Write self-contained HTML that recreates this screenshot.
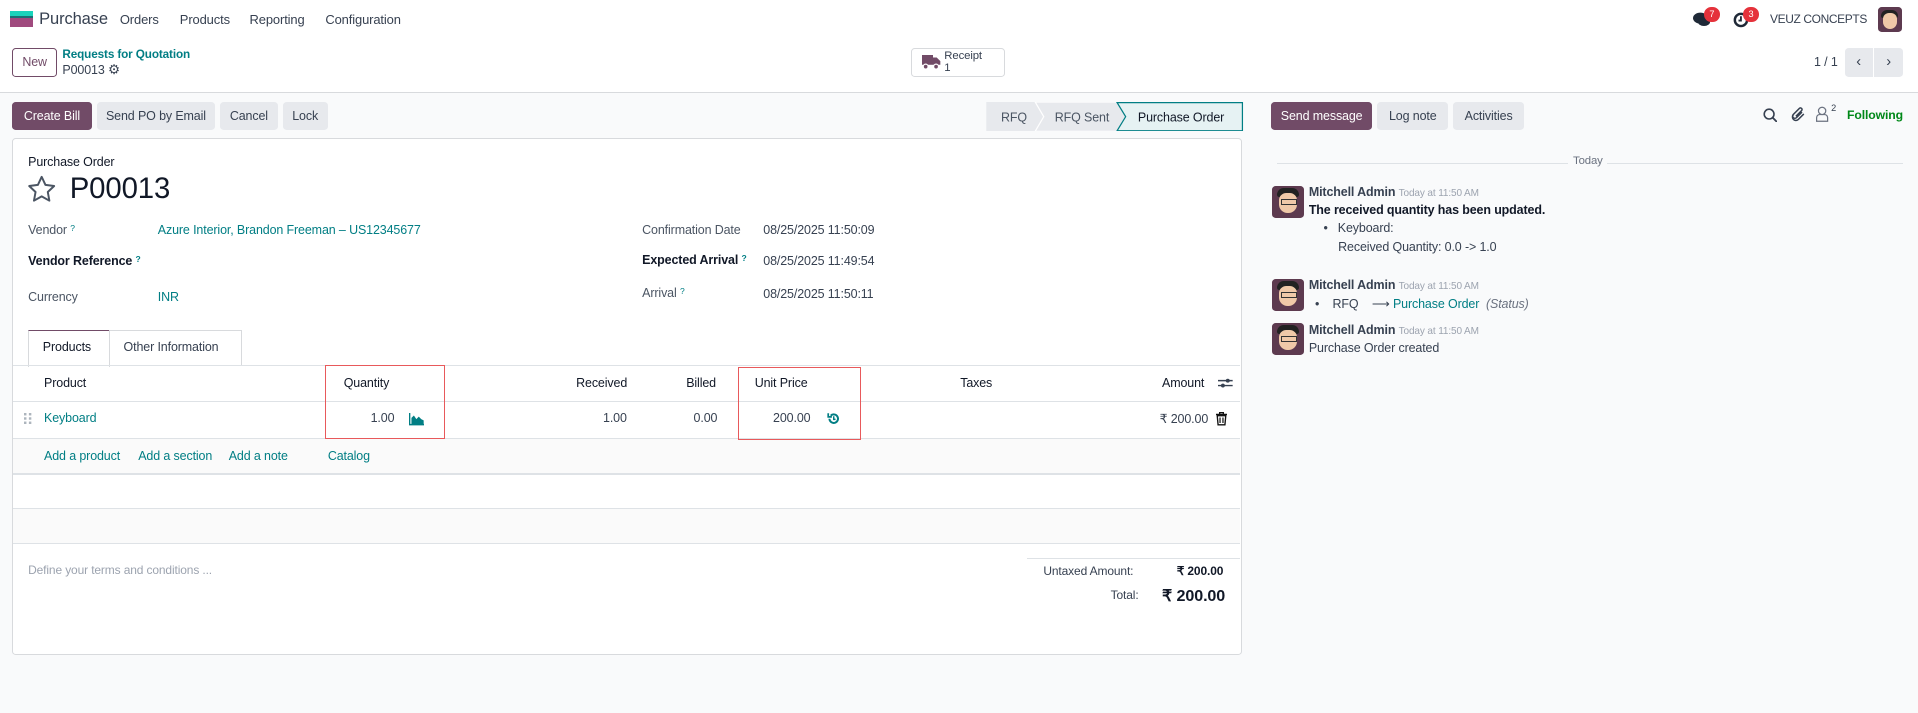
<!DOCTYPE html>
<html><head><meta charset="utf-8"><style>
html,body{margin:0;padding:0;}
body{width:1568px;height:583px;zoom:1.2232;overflow:hidden;background:#fff;font-family:"Liberation Sans",sans-serif;font-size:10.2px;letter-spacing:-0.1px;color:#374151;position:relative;}
.a{position:absolute;white-space:nowrap;}
.teal{color:#017e84;}
.btn{position:absolute;height:23px;line-height:23px;border-radius:3px;background:#e7e9ed;color:#374151;font-size:10.2px;text-align:center;}
.pri{background:#714b67;color:#fff;}
.lbl{color:#4b5563;}
.b{font-weight:bold;color:#111827;}
.sup{font-size:7px;color:#017e84;vertical-align:top;}
.hl{position:absolute;height:1px;background:#dee2e6;}
.av{position:absolute;width:26px;height:26px;border-radius:3px;background:#5d3a4f;overflow:hidden;}
.av i{position:absolute;left:6px;top:6px;width:14px;height:16px;border-radius:6px 6px 7px 7px;background:#f0c9a8;}
.av b{position:absolute;left:4px;top:2px;width:18px;height:7px;border-radius:6px 6px 2px 2px;background:#222;}
.av u{position:absolute;left:7px;top:11px;width:12px;height:3px;border:1px solid #333;text-decoration:none;}
.nm{font-weight:bold;color:#374151;}
.tm{font-size:8.2px;color:#9ca3af;}
</style></head><body>
<div class="a" style="left:8px;top:9px;width:19px;height:4px;background:#1ad3bb"></div>
<div class="a" style="left:8px;top:13px;width:19px;height:2px;background:#1a6f74"></div>
<div class="a" style="left:8px;top:15px;width:19px;height:7px;background:#a04a7e"></div>
<div class="a" style="left:32px;top:8px;font-size:13.5px;color:#374151">Purchase</div>
<div class="a" style="left:98px;top:10px;font-size:10.6px;color:#374151">Orders</div>
<div class="a" style="left:147px;top:10px;font-size:10.6px;color:#374151">Products</div>
<div class="a" style="left:204px;top:10px;font-size:10.6px;color:#374151">Reporting</div>
<div class="a" style="left:266px;top:10px;font-size:10.6px;color:#374151">Configuration</div>
<svg class="a" style="left:1384px;top:10px" width="14" height="13" viewBox="0 0 14 13"><ellipse cx="6" cy="5" rx="6" ry="4.5" fill="#1f2937"/><ellipse cx="9" cy="8" rx="5" ry="3.5" fill="#1f2937"/></svg>
<div class="a" style="left:1393px;top:6px;width:13px;height:12px;border-radius:6px;background:#e5323b;color:#fff;font-size:7.5px;text-align:center;line-height:12px">7</div>
<svg class="a" style="left:1417px;top:10px" width="13" height="13" viewBox="0 0 13 13"><circle cx="6.5" cy="6.5" r="5" fill="none" stroke="#1f2937" stroke-width="2"/><path d="M6.5 3.5v3.5h-2" stroke="#1f2937" stroke-width="1.5" fill="none"/></svg>
<div class="a" style="left:1425px;top:6px;width:13px;height:12px;border-radius:6px;background:#e5323b;color:#fff;font-size:7.5px;text-align:center;line-height:12px">3</div>
<div class="a" style="left:1447px;top:10px;font-size:9.8px;letter-spacing:-0.3px;color:#374151">VEUZ CONCEPTS</div>
<div class="av" style="left:1535px;top:6px;width:20px;height:20px"><b style="left:3px;width:14px"></b><i style="left:4px;width:12px;height:13px;top:5px"></i></div>

<div class="a" style="left:10px;top:39px;width:35px;height:22px;border:1px solid #714b67;border-radius:3px;color:#714b67;text-align:center;line-height:22px;font-size:10.2px">New</div>
<div class="a teal" style="left:51px;top:39px;font-size:9.6px;font-weight:bold;color:#017e84">Requests for Quotation</div>
<div class="a" style="left:51px;top:51px;font-size:10.2px;color:#374151">P00013 <span style="font-size:11px;color:#374151">⚙</span></div>
<div class="a" style="left:745px;top:39px;width:75px;height:22px;border:1px solid #d8dadd;border-radius:3px;background:#fff"></div>
<svg class="a" style="left:754px;top:45px" width="15" height="12" viewBox="0 0 15 12"><rect x="0" y="0" width="9" height="8" fill="#714b67"/><path d="M9 2h3l3 3v3H9z" fill="#714b67"/><circle cx="3" cy="9.5" r="2" fill="#714b67" stroke="#fff"/><circle cx="11.5" cy="9.5" r="2" fill="#714b67" stroke="#fff"/></svg>
<div class="a" style="left:772px;top:41px;font-size:9.3px;line-height:10px;color:#374151">Receipt<br>1</div>
<div class="a" style="left:1483px;top:45px;font-size:10.2px">1 / 1</div>
<div class="a" style="left:1508px;top:39px;width:23px;height:24px;background:#e7e9ed;border-radius:3px 0 0 3px;text-align:center;line-height:24px;font-size:12px">&#x2039;</div>
<div class="a" style="left:1532px;top:39px;width:24px;height:24px;background:#e7e9ed;border-radius:0 3px 3px 0;text-align:center;line-height:24px;font-size:12px">&#x203A;</div>
<div class="hl" style="left:0;top:75px;width:1568px;background:#d8dadd"></div>
<div class="a" style="left:0;top:76px;width:1568px;height:507px;background:#f9fafb"></div>

<div class="btn pri" style="left:10px;top:83px;width:65px">Create Bill</div>
<div class="btn" style="left:79px;top:83px;width:97px">Send PO by Email</div>
<div class="btn" style="left:180px;top:83px;width:47px">Cancel</div>
<div class="btn" style="left:231px;top:83px;width:37px">Lock</div>
<svg class="a" style="left:805px;top:83px" width="212" height="24" viewBox="0 0 212 24">
<path d="M1 0H41L48 12L41 24H1z" fill="#e7e9ed"/>
<path d="M41 0H108L115 12L108 24H41L48 12z" fill="#e7e9ed" stroke="#fff"/>
<path d="M108 0.5H210.5V23.5H108L115 12z" fill="#e6f2f3" stroke="#017e84"/>
<text x="13" y="16" font-family="Liberation Sans" font-size="10.2" fill="#4b5563">RFQ</text>
<text x="57" y="16" font-family="Liberation Sans" font-size="10.2" fill="#4b5563">RFQ Sent</text>
<text x="125" y="16" font-family="Liberation Sans" font-size="10.2" fill="#111827">Purchase Order</text>
</svg>

<div class="a" style="left:10px;top:113px;width:1004px;height:421px;background:#fff;border:1px solid #d8dadd;border-radius:3px"></div>
<div class="a" style="left:23px;top:127px;font-size:10.2px;color:#111827">Purchase Order</div>
<svg class="a" style="left:22px;top:143px" width="24" height="23" viewBox="0 0 24 23"><path d="M12 1.5l3.1 6.6 7.1.9-5.2 4.9 1.3 7.1L12 17.5 5.7 21l1.3-7.1L1.8 9l7.1-.9z" fill="none" stroke="#4b5563" stroke-width="1.6" stroke-linejoin="round"/></svg>
<div class="a" style="left:57px;top:141px;font-size:24px;color:#111827">P00013</div>

<div class="a lbl" style="left:23px;top:182px">Vendor <span class="sup">?</span></div>
<div class="a teal" style="left:129px;top:182px">Azure Interior, Brandon Freeman – US12345677</div>
<div class="a b" style="left:23px;top:208px">Vendor Reference <span class="sup">?</span></div>
<div class="a lbl" style="left:23px;top:237px">Currency</div>
<div class="a teal" style="left:129px;top:237px">INR</div>
<div class="a lbl" style="left:525px;top:182px">Confirmation Date</div>
<div class="a" style="left:624px;top:182px">08/25/2025 11:50:09</div>
<div class="a b" style="left:525px;top:207px">Expected Arrival <span class="sup">?</span></div>
<div class="a" style="left:624px;top:208px">08/25/2025 11:49:54</div>
<div class="a lbl" style="left:525px;top:234px">Arrival <span class="sup">?</span></div>
<div class="a" style="left:624px;top:235px">08/25/2025 11:50:11</div>

<div class="a" style="left:23px;top:270px;width:65px;height:29px;background:#fff;border:1px solid #d8dadd;border-top:1px solid #714b67;border-bottom:none"></div>
<div class="a" style="left:35px;top:278px;color:#111827">Products</div>
<div class="a" style="left:89px;top:270px;width:108px;height:28px;border:1px solid #d8dadd;border-left:none;border-bottom:none"></div>
<div class="a" style="left:101px;top:278px;color:#374151">Other Information</div>
<div class="hl" style="left:11px;top:298px;width:1003px"></div>
<div class="hl" style="left:11px;top:328px;width:1003px"></div>
<div class="hl" style="left:11px;top:358px;width:1003px"></div>
<div class="a" style="left:11px;top:359px;width:1003px;height:28px;background:#fafafa"></div>
<div class="hl" style="left:11px;top:387px;width:1003px"></div>
<div class="a" style="left:11px;top:416px;width:1003px;height:28px;background:#fafafa"></div>
<div class="hl" style="left:11px;top:415px;width:1003px"></div>
<div class="hl" style="left:11px;top:444px;width:1003px"></div>

<div class="a" style="left:36px;top:307px;color:#111827">Product</div>
<div class="a" style="left:281px;top:307px;color:#111827">Quantity</div>
<div class="a" style="left:471px;top:307px;color:#111827">Received</div>
<div class="a" style="left:561px;top:307px;color:#111827">Billed</div>
<div class="a" style="left:617px;top:307px;color:#111827">Unit Price</div>
<div class="a" style="left:785px;top:307px;color:#111827">Taxes</div>
<div class="a" style="left:950px;top:307px;color:#111827">Amount</div>
<svg class="a" style="left:996px;top:308px" width="12" height="10" viewBox="0 0 12 10"><path d="M0 3h12M0 7h12" stroke="#374151" stroke-width="1.2"/><circle cx="8" cy="3" r="1.6" fill="#374151"/><circle cx="4" cy="7" r="1.6" fill="#374151"/></svg>

<svg class="a" style="left:20px;top:338px" width="6" height="9" viewBox="0 0 6 9"><g fill="#adb5bd"><rect x="0" y="0" width="2" height="2"/><rect x="4" y="0" width="2" height="2"/><rect x="0" y="3.5" width="2" height="2"/><rect x="4" y="3.5" width="2" height="2"/><rect x="0" y="7" width="2" height="2"/><rect x="4" y="7" width="2" height="2"/></g></svg>
<div class="a teal" style="left:36px;top:336px">Keyboard</div>
<div class="a" style="left:303px;top:336px">1.00</div>
<svg class="a" style="left:334px;top:338px" width="13" height="10" viewBox="0 0 13 10"><path d="M0.5 0v9.5H13" stroke="#017e84" stroke-width="1.2" fill="none"/><path d="M2 9V4l2 -2 2 3 2-2 2 2 2 1v3z" fill="#017e84"/></svg>
<div class="a" style="left:493px;top:336px">1.00</div>
<div class="a" style="left:567px;top:336px">0.00</div>
<div class="a" style="left:632px;top:336px">200.00</div>
<svg class="a" style="left:676px;top:337px" width="11" height="11" viewBox="0 0 11 11"><path d="M2 5.5A3.5 3.5 0 1 0 3 3" stroke="#017e84" stroke-width="1.6" fill="none"/><path d="M1 1v3h3" stroke="#017e84" stroke-width="1.4" fill="none"/><path d="M5.5 3.5v2.5h1.5" stroke="#017e84" stroke-width="1.2" fill="none"/></svg>
<div class="a" style="left:948px;top:336px">₹ 200.00</div>
<svg class="a" style="left:994px;top:337px" width="9" height="11" viewBox="0 0 9 11"><path d="M0 2h9M3 2V0.5h3V2M1 3h7l-0.7 7.5H1.7z" stroke="#111" stroke-width="1.1" fill="none"/><path d="M3.3 4.5v4.5M5.7 4.5v4.5" stroke="#111"/></svg>

<div class="a teal" style="left:36px;top:367px">Add a product</div>
<div class="a teal" style="left:113px;top:367px">Add a section</div>
<div class="a teal" style="left:187px;top:367px">Add a note</div>
<div class="a teal" style="left:268px;top:367px">Catalog</div>

<div class="a" style="left:266px;top:298px;width:96px;height:59px;border:1.5px solid #e8595b"></div>
<div class="a" style="left:603px;top:300px;width:99px;height:58px;border:1.5px solid #e8595b"></div>

<div class="a" style="left:23px;top:460px;color:#9ca3af;font-size:9.8px">Define your terms and conditions ...</div>
<div class="hl" style="left:840px;top:456px;width:174px"></div>
<div class="a" style="left:853px;top:461px;color:#374151;font-size:9.8px">Untaxed Amount:</div>
<div class="a" style="left:962px;top:461px;font-weight:bold;color:#111827;font-size:9.8px">₹ 200.00</div>
<div class="a" style="left:908px;top:481px;color:#374151;font-size:9.8px">Total:</div>
<div class="a" style="left:950px;top:479px;font-weight:bold;color:#111827;font-size:13.2px">₹ 200.00</div>

<div class="btn pri" style="left:1039px;top:83px;width:83px">Send message</div>
<div class="btn" style="left:1126px;top:83px;width:58px">Log note</div>
<div class="btn" style="left:1188px;top:83px;width:58px">Activities</div>
<svg class="a" style="left:1441px;top:88px" width="12" height="12" viewBox="0 0 12 12"><circle cx="5" cy="5" r="4" stroke="#374151" stroke-width="1.3" fill="none"/><path d="M8 8l3.5 3.5" stroke="#374151" stroke-width="1.5"/></svg>
<svg class="a" style="left:1464px;top:87px" width="12" height="13" viewBox="0 0 12 13"><path d="M9 5L4.5 9.5a1.8 1.8 0 0 1-2.6-2.6L7 1.8a1.3 1.3 0 0 1 1.8 1.8L4 8.4" stroke="#374151" stroke-width="1.2" fill="none"/><path d="M10.5 6.5L6 11a2.8 2.8 0 0 1-4-4" stroke="#374151" stroke-width="1.2" fill="none"/></svg>
<svg class="a" style="left:1485px;top:87px" width="10" height="13" viewBox="0 0 10 13"><circle cx="5" cy="4" r="3" stroke="#6b7280" fill="none"/><path d="M0.5 12.5V9.5a2.5 2.5 0 0 1 2.5-2.5h4a2.5 2.5 0 0 1 2.5 2.5v3z" stroke="#6b7280" fill="none"/></svg>
<div class="a" style="left:1497px;top:84px;font-size:7.5px;color:#374151">2</div>
<div class="a" style="left:1510px;top:88px;color:#008818;font-weight:bold;font-size:10px">Following</div>

<div class="hl" style="left:1044px;top:133px;width:238px"></div>
<div class="hl" style="left:1314px;top:133px;width:242px"></div>
<div class="a" style="left:1286px;top:127px;color:#6b7280;font-size:9.3px">Today</div>

<div class="av" style="left:1040px;top:152px"><b></b><i></i><u></u></div>
<div class="a" style="left:1070px;top:151px"><span class="nm">Mitchell Admin</span> <span class="tm">Today at 11:50 AM</span></div>
<div class="a" style="left:1070px;top:166px;font-weight:bold;color:#111827">The received quantity has been updated.</div>
<div class="a" style="left:1082px;top:181px">•&nbsp;&nbsp; Keyboard:</div>
<div class="a" style="left:1094px;top:196px">Received Quantity: 0.0 -&gt; 1.0</div>

<div class="av" style="left:1040px;top:228px"><b></b><i></i><u></u></div>
<div class="a" style="left:1070px;top:227px"><span class="nm">Mitchell Admin</span> <span class="tm">Today at 11:50 AM</span></div>
<div class="a" style="left:1075px;top:242px">•&nbsp;&nbsp;&nbsp; RFQ &nbsp;&nbsp; ⟶ <span class="teal">Purchase Order</span> &nbsp;<i style="color:#6b7280">(Status)</i></div>

<div class="av" style="left:1040px;top:264px"><b></b><i></i><u></u></div>
<div class="a" style="left:1070px;top:264px"><span class="nm">Mitchell Admin</span> <span class="tm">Today at 11:50 AM</span></div>
<div class="a" style="left:1070px;top:279px">Purchase Order created</div>
</body></html>
